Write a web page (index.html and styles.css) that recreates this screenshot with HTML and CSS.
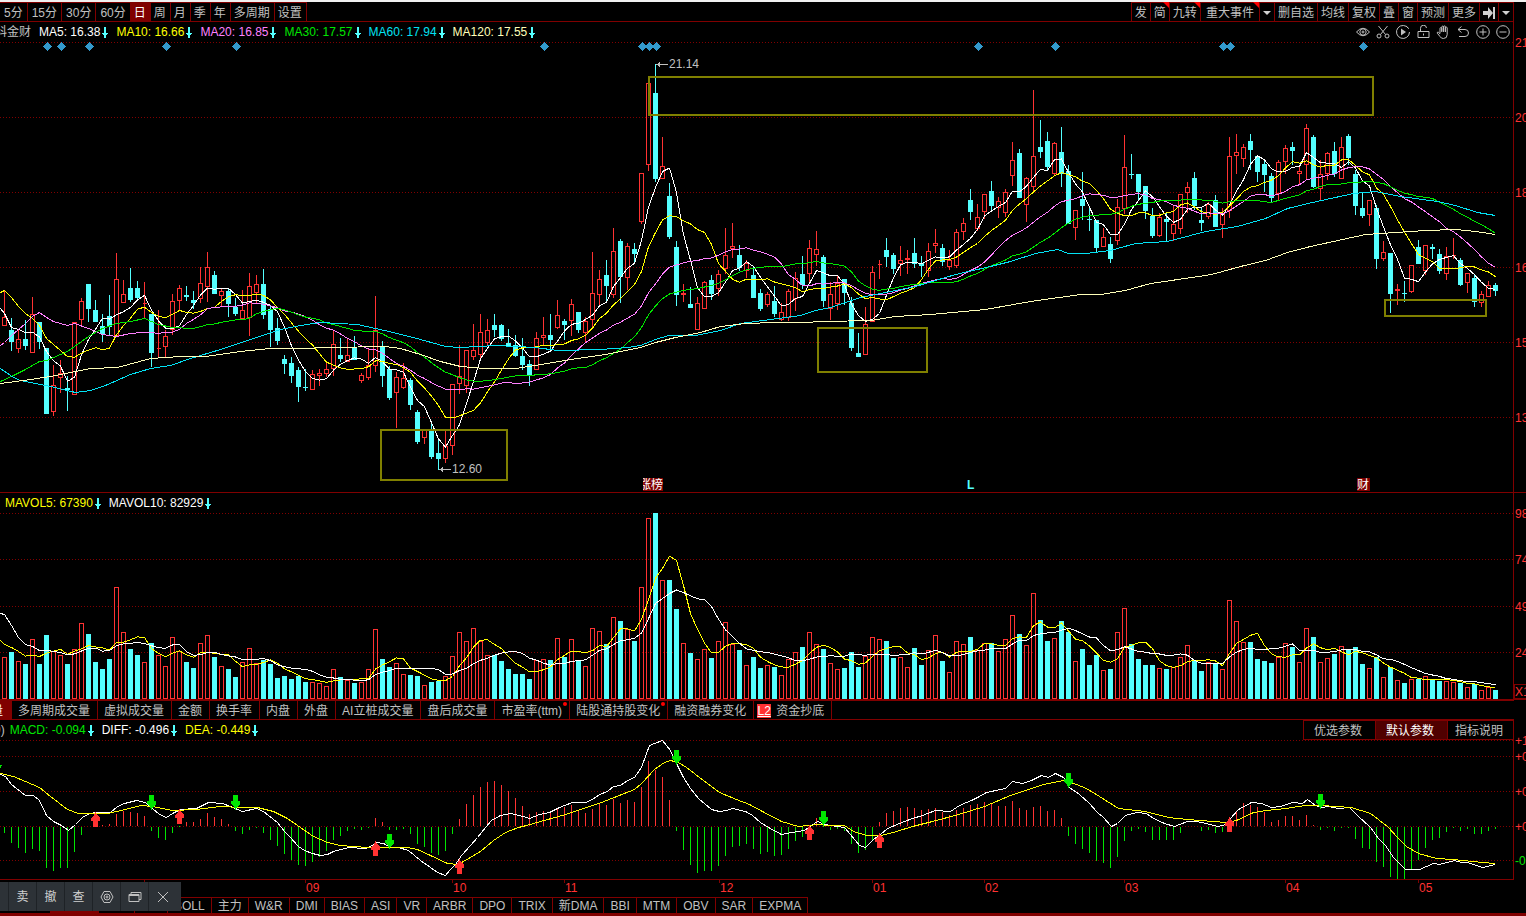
FILE: index.html
```html
<!DOCTYPE html>
<html lang="zh-CN">
<head>
    <meta charset="UTF-8">
    <meta name="viewport" content="width=device-width, initial-scale=1.0">
    <title>日K线</title>
    <link rel="stylesheet" href="styles.css">
</head>
<body>
    <svg class="defs" width="0" height="0" aria-hidden="true">
        <symbol id="down" viewBox="0 0 7 11"><path d="M3 0h2v6h2v1h-1v1h-1v3h-2v-3h-1v-1h-1v-1h2z" fill="#54ffff"/></symbol>
    </svg>

    <header class="toolbar">
        <nav class="tabs periods">
            <button class="wide">5分</button>
            <button class="wide">15分</button>
            <button class="wide">30分</button>
            <button class="wide">60分</button>
            <button class="active">日</button>
            <button>周</button>
            <button>月</button>
            <button>季</button>
            <button>年</button>
            <button>多周期</button>
            <button>设置</button>
        </nav>
        <nav class="tabs tools">
            <button>发</button>
            <button class="flag">简</button>
            <button class="flag">九转</button>
            <button class="flag event">重大事件</button>
            <button class="drop" aria-label="事件菜单"><svg width="8" height="4"><path d="M0 0h8l-4 4z"/></svg></button>
            <button>删自选</button>
            <button>均线</button>
            <button>复权</button>
            <button>叠</button>
            <button>窗</button>
            <button>预测</button>
            <button>更多</button>
            <button aria-label="到最右"><svg width="12" height="12"><path d="M0 4h5v-4l5 6-5 6v-4h-5zM10 0h2v12h-2z"/></svg></button>
            <button class="drop" aria-label="更多菜单"><svg width="8" height="4"><path d="M0 0h8l-4 4z"/></svg></button>
        </nav>
    </header>

    <section class="panel price">
        <div class="legend">
            <span class="name">科金财</span>
            <span class="white">MA5: 16.38<svg><use href="#down"/></svg></span>
            <span class="yellow">MA10: 16.66<svg><use href="#down"/></svg></span>
            <span class="pink">MA20: 16.85<svg><use href="#down"/></svg></span>
            <span class="green">MA30: 17.57<svg><use href="#down"/></svg></span>
            <span class="cyan">MA60: 17.94<svg><use href="#down"/></svg></span>
            <span class="cream">MA120: 17.55<svg><use href="#down"/></svg></span>
            <div class="icons">
                <button aria-label="显示"><svg viewBox="0 0 14 14"><path d="M.5 7Q7-.5 13.500 7Q7 14.500.5 7z"/><circle cx="7" cy="7" r="3.200"/><circle cx="7" cy="7" r="1"/></svg></button>
                <button aria-label="剪切"><svg viewBox="0 0 14 14"><path d="M2.500 1l7 8.500M11.500 1l-7 8.500"/><circle cx="3" cy="11" r="2"/><circle cx="11" cy="11" r="2"/></svg></button>
                <button aria-label="回放"><svg viewBox="0 0 14 14"><path d="M12.500 3.500A6.500 6.500 0 1 0 13.500 7M10 1l2.800 2.500"/><path class="solid" d="M5 3.500v7l5-3.500z"/></svg></button>
                <button aria-label="锁定"><svg viewBox="0 0 14 14"><path d="M2 6.500h11v6h-11zM4.500 6.500v-3a3 3 0 0 1 6-.5M7.500 8.500v2"/></svg></button>
                <button aria-label="拖动"><svg viewBox="0 0 14 14"><path d="M4 8.500V3.500a.9.900 0 0 1 1.800 0V7M5.800 6.500V2a.9.900 0 0 1 1.800 0v5M7.600 6.500V1.800a.9.900 0 0 1 1.800 0V7M9.400 6.800V3a.9.900 0 0 1 1.800 0v6.500q0 4-3.800 4q-2.400 0-3.400-2L1.300 8.200q-.4-1.400 1-1L4 8.800"/></svg></button>
                <button aria-label="撤销"><svg viewBox="0 0 14 14"><path d="M5.500 1.500l-3.500 3 3.500 3M2 4.500h7a3.500 3.500 0 0 1 0 7H3"/></svg></button>
                <button aria-label="放大"><svg viewBox="0 0 14 14"><circle cx="7" cy="7" r="6.300"/><path d="M3.500 7h7M7 3.500v7"/></svg></button>
                <button aria-label="缩小"><svg viewBox="0 0 14 14"><circle cx="7" cy="7" r="6.300"/><path d="M3.500 7h7"/></svg></button>
            </div>
        </div>
        <svg id="price" class="chart" viewBox="0 42 1526 450"></svg>
    </section>

    <section class="panel volume">
        <div class="legend">
            <span class="yellow">MAVOL5: 67390<svg><use href="#down"/></svg></span>
            <span class="white">MAVOL10: 82929<svg><use href="#down"/></svg></span>
        </div>
        <svg id="volume" class="chart" viewBox="0 513 1526 186"></svg>
    </section>

    <nav class="tabs indicators">
        <button class="active cut">量</button>
        <button>多周期成交量</button>
        <button>虚拟成交量</button>
        <button>金额</button>
        <button>换手率</button>
        <button>内盘</button>
        <button>外盘</button>
        <button>AI立桩成交量</button>
        <button>盘后成交量</button>
        <button class="dot">市盈率(ttm)</button>
        <button class="dot">陆股通持股变化</button>
        <button>融资融券变化</button>
        <button class="level"><b>L2</b>资金抄底</button>
    </nav>

    <section class="panel macd">
        <div class="legend">
            <span class="param">9)</span>
            <span class="green">MACD: -0.094<svg><use href="#down"/></svg></span>
            <span class="white">DIFF: -0.496<svg><use href="#down"/></svg></span>
            <span class="yellow">DEA: -0.449<svg><use href="#down"/></svg></span>
            <div class="params">
                <button>优选参数</button>
                <button class="active">默认参数</button>
                <button>指标说明</button>
            </div>
        </div>
        <svg id="macd" class="chart" viewBox="0 740 1526 157"></svg>
    </section>

    <footer class="bottom">
        <nav class="tabs formulas">
            <button class="first">成交量</button>
            <button class="active">MACD</button>
            <button>KDJ</button>
            <button>RSI</button>
            <button>BOLL</button>
            <button>主力</button>
            <button>W&amp;R</button>
            <button>DMI</button>
            <button>BIAS</button>
            <button>ASI</button>
            <button>VR</button>
            <button>ARBR</button>
            <button>DPO</button>
            <button>TRIX</button>
            <button>新DMA</button>
            <button>BBI</button>
            <button>MTM</button>
            <button>OBV</button>
            <button>SAR</button>
            <button>EXPMA</button>
        </nav>
        <div class="trade">
            <button>卖</button>
            <button>撤</button>
            <button>查</button>
            <button aria-label="设置"><svg width="14" height="14"><path d="M4 1.500h6l3 5.500-3 5.500H4L1 7z"/><circle cx="7" cy="7" r="3"/><circle cx="7" cy="7" r="1"/></svg></button>
            <button aria-label="窗口"><svg width="14" height="14"><path d="M1 4.500h10v7H1zM3 4V2.500h10v7h-2M1 5.500h10"/></svg></button>
            <button aria-label="关闭"><svg width="14" height="14"><path d="M2 2l10 10M12 2L2 12"/></svg></button>
        </div>
    </footer>

    <script src="chart.js"></script>
</body>
</html>
```
FILE: styles.css
```css
* {
    box-sizing: border-box;
}

body {
    margin: 0;
    border-top: 2px solid #f0f0f0;
    background: #000;
    color: #c0c0c0;
    font-family: "Liberation Sans", "Noto Sans CJK SC", sans-serif;
    font-size: 12px;
    line-height: 18px;
    overflow-x: hidden;
}

button {
    margin: 0;
    padding: 0;
    border: 0;
    background: none;
    color: inherit;
    font: inherit;
    white-space: nowrap;
    cursor: pointer;
}

.defs {
    position: absolute;
}

/* tab rows */
.tabs {
    display: flex;
}

.tabs button {
    position: relative;
    display: flex;
    align-items: center;
    flex-shrink: 0;
    border-right: 1px solid #800000;
}

.tabs .active {
    background: #800000;
    color: #fff;
}

.toolbar {
    display: flex;
    justify-content: space-between;
    height: 20px;
    margin-right: 12px;
    border-bottom: 1px solid #800000;
}

.toolbar button {
    padding: 1px 4px 0 3px;
    border-top: 1px solid #800000;
}

.toolbar .wide {
    padding: 1px 4px 0;
}

.toolbar .tools button {
    padding: 1px 3px 0;
}

.toolbar .tools button:first-child {
    border-left: 1px solid #800000;
}

.toolbar .tools .event {
    padding: 1px 5px 0;
}

.toolbar svg {
    fill: #d0d0d0;
}

.flag::after {
    content: "";
    position: absolute;
    top: -1px;
    right: 0;
    border: 3px solid #ff0000;
    border-left-color: transparent;
    border-bottom-color: transparent;
}

/* panels */
.panel {
    border-bottom: 1px solid #800000;
}

.panel.macd {
    border-bottom: 0;
}

.legend {
    display: flex;
    align-items: center;
    gap: 8px;
    height: 20px;
    margin-right: 12px;
    border-right: 1px solid #800000;
    white-space: nowrap;
}

.legend span {
    display: flex;
    align-items: center;
}

.legend span svg {
    width: 7px;
    height: 11px;
    margin-left: 1px;
}

.legend .name {
    margin-left: -5px;
}

.volume .legend {
    padding-left: 5px;
}

.legend .param {
    margin-left: -6px;
    margin-right: -3px;
}

.white { color: #fff; }
.yellow { color: #ffff00; }
.pink { color: #ff80ff; }
.green { color: #00e600; }
.cyan { color: #02e2f4; }
.cream { color: #ffffb9; }

.legend .name,
.legend .param {
    color: #c0c0c0;
}

.icons {
    display: flex;
    margin-left: auto;
}

.icons button {
    display: flex;
    justify-content: center;
    width: 20px;
}

.icons svg {
    width: 14px;
    height: 14px;
    fill: none;
    stroke: #c0c0c0;
}

.icons .solid {
    fill: #c0c0c0;
    stroke: none;
}

.params {
    display: flex;
    align-self: stretch;
    margin-left: auto;
}

.params button {
    padding: 1px 13px 0 10px;
    border: 1px solid #800000;
    border-width: 1px 0 1px 1px;
}

.params button:last-child {
    padding: 1px 10px 0 7px;
}

.params .active {
    background: #500000;
    color: #fff;
}

/* charts */
.chart {
    display: block;
    width: 100%;
    height: auto;
    overflow: visible;
    fill: none;
    shape-rendering: crispEdges;
}

.grid {
    stroke: #800000;
    stroke-dasharray: 1 2;
}

.line {
    stroke: #800000;
}

.up {
    stroke: #ff3232;
}

.down {
    fill: #54ffff;
}

.fall {
    stroke: #00e600;
}

.ma {
    stroke: currentColor;
}

.zone {
    stroke: #808000;
    stroke-width: 2;
}

.mark {
    fill: #3399cc;
}

.tag {
    fill: #800000;
}

.buy {
    fill: #ff3232;
}

.sell {
    fill: #00e600;
}

.chart text {
    fill: #c0c0c0;
}

.chart .axis {
    fill: #ff3232;
}

.chart .axis.low {
    fill: #00e600;
}

.chart .news {
    fill: #fff;
}

.chart .letter {
    fill: #54ffff;
    font-weight: bold;
}

.callout {
    stroke: #c0c0c0;
}

/* volume indicator tabs */
.indicators {
    height: 20px;
    border-top: 1px solid #800000;
    border-bottom: 1px solid #800000;
    margin-right: 12px;
}

.indicators button {
    padding: 1px 7px 0 6px;
}

.indicators .cut {
    width: 12px;
    justify-content: flex-end;
    padding: 1px 8px 0 0;
}

.dot::after {
    content: "";
    position: absolute;
    top: 1px;
    right: 2px;
    width: 4px;
    height: 4px;
    border-radius: 2px;
    background: #ff0000;
}

.level b {
    width: 14px;
    margin: 0 5px 0 -3px;
    background: #ff3232;
    color: #fff;
    font-weight: normal;
    line-height: 14px;
    text-align: center;
    text-decoration: underline;
}

/* bottom bar */
.bottom {
    position: relative;
    border-bottom: 3px solid #800000;
}

.formulas {
    height: 16px;
}

.formulas button {
    padding: 0 6px;
    border-top: 1px solid #800000;
}

.formulas .first {
    width: 51px;
}

.trade {
    position: absolute;
    left: 0;
    bottom: 2px;
    display: flex;
    height: 29px;
    padding: 0 5px 0 8px;
    background: #2d3237;
    color: #d0d0d0;
}

.trade button {
    display: flex;
    align-items: center;
    justify-content: center;
    width: 28px;
    padding-top: 1px;
    border-left: 1px solid #1e2226;
}

.trade svg {
    fill: none;
    stroke: #c0c0c0;
}
```
FILE: chart.js
```js
const STEP = 7;

// [rising, high, body top, body bottom, low] on the plot scale
const candles = [
    [1,291,317,326,326],[0,318,330,342,351],[1,330,339,349,353],[0,320,339,346,350],[1,297,314,353,353],
    [0,322,322,342,349],[0,348,348,414,414],[1,365,385,412,416],[1,360,373,378,393],[0,376,388,390,411],
    [1,322,322,395,395],[1,298,301,320,325],[0,284,284,309,322],[0,300,310,322,322],[0,314,326,334,342],
    [0,295,316,327,336],[1,253,279,336,336],[1,280,294,303,303],[0,268,288,300,302],[0,281,288,298,301],
    [1,282,303,304,318],[0,314,314,353,367],[1,310,348,349,357],[1,330,336,347,358],[1,294,301,330,335],
    [1,285,288,301,311],[0,286,295,297,301],[0,291,300,303,309],[1,267,283,299,303],[1,252,267,287,302],
    [0,271,275,294,294],[1,289,291,296,307],[0,289,291,304,317],[0,298,307,314,316],[1,290,310,319,319],
    [1,273,286,318,336],[1,275,284,293,303],[0,269,284,315,319],[0,306,309,330,347],[0,318,328,341,345],
    [0,355,359,364,374],[0,357,363,376,383],[0,367,370,387,402],[0,369,387,388,391],[1,370,374,390,390],
    [1,369,373,376,386],[1,362,369,374,377],[1,330,344,369,376],[0,338,355,359,362],[1,338,355,362,362],
    [0,336,347,360,360],[1,373,375,381,383],[1,349,365,378,380],[1,296,330,366,372],[0,341,347,376,387],
    [0,366,369,398,400],[1,372,377,393,428],[1,363,378,388,389],[0,378,380,405,410],[0,410,412,442,444],
    [1,429,429,438,444],[0,422,430,457,459],[0,440,453,459,470],[1,429,446,459,463],[1,384,384,446,455],
    [1,345,376,384,394],[1,350,350,386,393],[1,324,350,357,360],[1,314,332,355,358],[1,319,330,343,345],
    [0,314,325,330,337],[0,324,325,339,341],[0,329,343,347,347],[0,335,345,356,357],[0,338,356,365,370],
    [0,360,364,375,386],[1,332,338,370,370],[1,317,335,338,346],[0,314,335,340,351],[1,300,315,328,329],
    [0,319,321,325,340],[1,299,304,321,336],[0,312,312,330,333],[1,317,321,333,342],[1,252,293,320,329],
    [1,270,279,295,307],[0,260,275,286,302],[1,228,251,295,298],[0,239,241,277,303],[1,243,246,278,290],
    [0,243,249,254,263],[1,173,173,222,224],[1,83,83,165,171],[0,64,93,179,182],[1,137,166,179,179],
    [0,183,196,237,239],[0,241,247,295,306],[1,284,293,295,302],[0,287,304,308,308],[1,297,303,330,330],
    [1,281,282,309,309],[0,275,280,294,300],[1,270,274,289,296],[1,228,255,269,274],[1,223,246,249,258],
    [0,245,255,268,271],[1,260,263,271,278],[0,267,275,298,298],[0,289,293,309,311],[1,292,294,305,307],
    [0,286,301,314,317],[1,303,312,320,321],[1,289,291,318,321],[1,272,278,299,311],[0,256,274,285,289],
    [1,240,248,274,283],[1,231,249,255,266],[0,255,257,301,307],[1,282,294,309,320],[1,275,283,304,310],
    [0,279,279,293,305],[0,297,303,348,351],[0,333,353,357,357],[1,307,324,355,355],[1,266,272,322,322],
    [1,260,264,265,279],[0,238,250,257,267],[0,253,255,269,274],[1,246,260,264,276],[1,250,258,260,274],
    [0,238,253,264,268],[0,256,263,266,277],[1,243,251,271,277],[1,229,243,246,253],[0,244,248,262,266],
    [1,250,260,267,270],[1,229,232,266,268],[1,218,223,232,240],[0,189,200,212,220],[1,204,217,229,231],
    [1,194,194,212,219],[0,181,191,206,210],[1,197,201,208,218],[1,189,192,213,217],[1,142,160,176,186],
    [0,149,153,198,198],[1,177,178,205,222],[1,90,156,187,192],[0,120,147,152,158],[0,132,141,167,170],
    [1,142,143,174,176],[0,127,152,174,187],[0,165,171,224,224],[1,210,210,228,240],[0,172,199,206,220],
    [0,207,219,220,231],[0,220,220,248,252],[1,228,237,247,247],[0,237,244,259,263],[1,199,207,241,245],
    [1,135,167,209,214],[0,154,174,175,179],[0,174,174,192,200],[0,186,186,211,219],[0,208,216,236,238],
    [1,213,217,236,237],[0,213,219,222,242],[1,206,224,234,241],[1,194,194,229,234],[1,182,187,193,213],
    [0,172,178,206,210],[0,207,220,223,231],[1,202,204,217,219],[0,195,200,227,227],[1,208,214,225,238],
    [1,137,156,211,218],[1,134,152,156,174],[1,144,147,159,167],[0,134,141,150,170],[0,156,156,172,182],
    [0,160,164,175,192],[0,173,176,198,202],[1,160,162,194,201],[1,145,148,162,174],[0,142,147,151,165],
    [1,166,171,174,184],[1,124,128,165,179],[0,135,137,187,188],[1,160,174,189,200],[1,152,153,174,180],
    [0,142,151,174,177],[1,137,147,179,179],[0,134,136,158,165],[0,170,174,206,215],[0,193,208,216,218],
    [1,200,200,215,226],[0,205,208,259,269],[1,241,252,259,261],[0,253,253,294,313],[1,284,289,291,305],
    [0,281,293,294,302],[1,265,265,292,293],[0,240,247,264,264],[1,245,245,271,275],[0,244,247,249,259],
    [0,249,254,271,274],[1,247,256,274,280],[1,238,255,256,259],[0,258,260,285,286],[1,273,273,283,293],
    [0,275,278,302,307],[1,291,294,303,307],[1,281,285,297,297],[0,283,285,291,296]
];

const volumes = [
    657,652,661,664,639,664,635,651,655,664,649,623,634,662,669,659,587,632,649,655,
    662,643,655,666,637,651,662,668,643,635,657,666,669,677,662,648,663,660,664,678,
    676,679,676,682,682,683,686,669,677,680,683,682,669,629,659,667,663,674,675,676,
    685,682,681,676,656,632,641,628,641,655,655,661,669,674,674,679,660,659,660,638,
    657,639,661,666,628,631,644,617,621,629,641,587,518,513,580,580,609,643,653,659,
    649,658,641,622,644,650,665,657,668,665,667,675,659,652,647,632,644,649,663,669,
    668,652,667,656,637,639,641,658,657,667,648,665,650,635,661,672,641,644,637,650,
    643,643,651,639,615,634,645,593,620,641,638,621,632,661,649,665,655,670,669,632,
    608,644,659,665,665,668,669,667,657,645,661,671,662,663,669,600,621,642,642,659,
    661,663,657,643,647,662,628,637,662,658,654,646,650,647,664,668,657,677,667,680,
    683,679,679,676,679,681,681,682,683,687,684,690,687,690
];

// the nine sessions left of the visible range, needed by the averages
const earlierVolumes = [542,541,594,619,624,637,641,641,644];

const bars = [
    833,843,848,853,849,851,868,871,868,868,852,835,827,826,825,824,814,811,812,813,
    816,831,838,840,833,826,822,822,819,813,817,819,824,831,834,830,828,833,840,846,
    854,860,865,866,862,857,851,840,836,831,829,830,828,818,822,830,830,829,834,844,
    847,853,855,851,834,819,804,795,787,782,781,785,791,798,806,814,812,811,813,808,
    807,805,810,813,809,804,805,799,803,800,802,787,761,770,777,800,831,850,865,873,
    871,871,866,856,847,846,844,849,854,852,856,855,849,841,837,829,818,826,830,829,
    831,844,853,850,841,822,813,811,808,807,808,810,809,808,812,815,810,808,805,804,
    802,804,806,806,801,808,810,807,806,811,810,818,836,844,849,853,861,863,868,857,
    841,831,829,832,840,840,840,840,833,827,827,831,830,833,832,825,812,803,805,807,
    812,822,820,816,816,820,815,825,830,828,831,828,828,839,848,849,862,867,877,879,
    879,869,860,848,840,838,832,828,831,829,834,834,831,829
];

const ma60 = "0,368 13,377 20,380 50,386 75,392 90,390 105,385 130,374 150,368 170,365 190,358 220,349 250,339 280,329 300,325 320,322 357,324 384,330 413,337 445,346 460,347 495,345 535,347 557,350 600,349 627,347 640,345 655,339 668,335 695,335 720,330 740,323 770,319 800,315 815,310 830,307 860,297 880,293 915,286 955,274 990,266 1010,261 1035,253 1057,249 1068,253 1085,253 1110,250 1135,243 1167,241 1190,235 1205,231 1237,226 1265,218 1287,208 1312,202 1353,193 1375,191 1400,196 1437,201 1455,205 1477,212 1495,215";
const ma120 = "0,383 30,379 50,376 75,371 90,368 117,367 150,358 180,356 205,356 240,351 270,348 300,348 330,347 385,346 400,348 420,354 440,361 460,366 485,368 515,368 535,365 570,359 605,354 625,350 640,347 655,342 675,337 700,332 720,326 745,323 775,322 800,322 825,321 870,320 895,316 930,314 985,309 1030,301 1080,294 1100,294 1125,290 1150,283 1205,275 1215,273 1240,266 1265,260 1287,252 1310,246 1365,234 1395,232 1425,230 1455,229 1475,231 1495,234";
const diff = "0,774 5,776 11,784 25,795 33,795 39,800 46,815 53,821 61,825 68,830 75,824 82,817 89,813 96,812 110,812 117,806 124,803 136,800 145,802 152,808 159,814 166,817 172,813 180,809 196,808 208,802 222,803 230,806 242,811 256,808 263,811 277,822 284,831 290,837 298,846 304,850 312,853 320,855 327,854 333,851 348,847 365,848 370,846 376,842 383,843 390,847 398,847 408,850 420,860 430,867 437,872 445,875 450,869 455,864 461,855 470,845 477,837 485,827 491,820 500,815 510,813 523,816 529,818 539,814 549,812 559,807 572,802 585,802 592,799 599,794 607,791 613,786 620,785 627,780 634,777 641,767 649,745 662,740 670,750 677,765 683,777 690,788 698,798 711,809 719,811 726,810 732,808 745,811 752,815 760,822 768,827 781,834 791,832 804,830 811,825 817,821 824,824 844,827 850,834 859,845 865,847 873,839 880,834 887,828 899,823 912,818 922,815 935,810 950,811 956,807 961,804 971,800 979,796 986,792 1005,788 1012,781 1022,783 1031,780 1041,775 1048,777 1055,773 1063,777 1069,787 1079,794 1089,803 1097,812 1103,817 1111,826 1117,823 1125,815 1136,812 1146,813 1153,818 1164,823 1174,826 1187,821 1196,821 1206,823 1217,826 1223,825 1230,818 1238,809 1251,802 1261,803 1271,807 1280,806 1292,802 1302,803 1307,799 1315,805 1321,807 1328,806 1338,808 1349,807 1357,815 1370,827 1378,838 1385,845 1393,857 1405,869 1419,869 1433,863 1439,864 1454,860 1461,862 1467,862 1482,867 1495,864";
const dea = "0,773 13,776 25,781 39,787 50,796 67,809 78,813 107,813 125,809 140,805 152,806 172,810 195,809 220,806 240,807 257,807 273,811 287,818 300,827 313,836 327,842 340,845 367,847 407,847 417,849 430,855 447,863 457,864 463,861 480,851 493,840 505,832 518,827 526,825 565,814 601,802 634,789 641,783 654,769 664,762 670,760 678,762 686,767 703,780 719,792 736,799 749,804 762,811 781,821 798,826 817,824 827,825 844,825 853,831 866,835 880,835 893,832 912,826 932,821 958,814 984,806 1010,795 1043,784 1063,780 1076,784 1086,788 1099,796 1118,808 1145,811 1168,817 1187,819 1213,821 1226,822 1236,820 1253,812 1266,810 1285,808 1305,805 1321,805 1351,807 1370,813 1387,826 1397,837 1406,846 1418,853 1436,858 1452,859 1482,862 1495,863";

const x = i => 4 + STEP * i;

function average(values, size, from) {
    const points = [];
    for (let i = Math.max(size - 1, from); i < values.length; i++) {
        const part = values.slice(i - size + 1, i + 1);
        const y = part.reduce((a, b) => a + b) / size;
        points.push(x(i - from) + "," + y.toFixed(1));
    }
    return points.join(" ");
}

const line = (name, points) => `<polyline class="ma ${name}" points="${points}" transform="translate(.5 .5)"/>`;
const path = (name, d) => `<path class="${name}" d="${d}"/>`;
const label = (name, px, y, text) => `<text class="${name}" x="${px}" y="${y}">${text}</text>`;
const grid = rows => rows.map(y => path("grid", `M0 ${y}.5H1513`)).join("");

function drawPrice() {
    const close = candles.map(c => c[0] ? c[2] : c[3]);
    let up = "", down = "";
    candles.forEach(([rising, high, top, bottom, low], i) => {
        const left = x(i) - 2;
        if (rising) {
            up += `M${x(i) + .5} ${high}V${top}M${x(i) + .5} ${bottom}V${low}`;
            up += `M${left + .5} ${top + .5}h4V${bottom - .5}h-4z`;
        } else {
            down += `M${x(i)} ${high}h1V${low}h-1zM${left} ${top}h5V${bottom}h-5z`;
        }
    });

    const marks = [6, 8, 12, 23, 33, 77, 91, 92, 93, 139, 150, 174, 175, 194]
        .map(i => `M${x(i) + 1} 42l4.500 4.500-4.500 4.500-4.500-4.500z`).join("");
    const prices = ["21.67", "20.10", "18.52", "16.94", "15.37", "13.79"];

    document.getElementById("price").innerHTML =
        grid([42, 117, 192, 267, 342, 417]) +
        path("line", "M1513.5 42V492") +
        path("up", up) + path("down", down) +
        line("white", "0,308 4,313 11,327 18,329 25,332 " + average(close, 5, 0)) +
        line("yellow", "0,292 4,290 11,297 18,306 25,313 32,318 39,325 46,338 53,344 60,350 " + average(close, 10, 0)) +
        line("pink", "0,345 4,342 11,335 25,323 32,316 39,312 46,317 53,321 67,325 74,323 88,328 102,334 116,336 130,333 " + average(close, 20, 0)) +
        line("green", "0,381 11,376 25,369 39,361 46,360 67,351 81,341 88,336 102,328 116,323 130,321 144,318 158,324 172,327 193,328 " + average(close, 30, 0)) +
        line("cyan", ma60) + line("cream", ma120) +
        `<rect class="zone" x="649" y="77" width="724" height="38"/>
        <rect class="zone" x="818" y="328" width="109" height="44"/>
        <rect class="zone" x="381" y="430" width="126" height="50"/>
        <rect class="zone" x="1385" y="300" width="101" height="16"/>` +
        path("mark", marks) +
        path("callout", "M656 64.500h12M659.500 62v5M658.500 63v3M439 469.500h12M442.500 467v5M441.500 468v3") +
        label("", 669, 68, "21.14") + label("", 452, 473, "12.60") +
        path("tag", "M643 478h20v13h-20zM1357 478h13v13h-13z") +
        `<svg x="643" y="478" width="8" height="13">${label("news", -4, 11, "涨")}</svg>` +
        label("news", 651, 489, "榜") + label("letter", 967, 489, "L") + label("news", 1357, 489, "财") +
        prices.map((p, i) => label("axis", 1515, 47 + 75 * i, p)).join("");
}

function drawVolume() {
    let up = "", down = "";
    volumes.forEach((y, i) => {
        const left = x(i) - 2;
        if (candles[i][0]) {
            up += `M${left + .5} ${y + .5}h4V698.5h-4z`;
        } else {
            down += `M${left} ${y}h5V699h-5z`;
        }
    });
    const all = earlierVolumes.concat(volumes);

    document.getElementById("volume").innerHTML =
        grid([513, 559, 606, 652]) +
        path("line", "M1513.5 492V699M1513.500 684.500H1526M1514.500 684V699M1514 698.500H1526") +
        path("up", up) + path("down", down) +
        line("yellow", "0,640 " + average(all, 5, 9)) +
        line("white", "0,613 " + average(all, 10, 9)) +
        label("axis", 1515, 518, "983") + label("axis", 1515, 564, "740") +
        label("axis", 1515, 611, "493") + label("axis", 1515, 657, "247") +
        label("axis", 1515, 696, "X100");
}

function drawMacd() {
    let up = "", fall = "";
    bars.forEach((y, i) => {
        if (y < 826) up += `M${x(i) + .5} 826V${y}`;
        else fall += `M${x(i) + .5} 827V${y}`;
    });
    const sell = [[21, 795], [33, 795], [55, 834], [96, 750], [117, 811], [152, 773], [188, 794]]
        .map(([i, y]) => `M${x(i) - 2} ${y}h5v6h2v3l-3 3-1.500 3-1.500-3-3-3v-3h2z`).join("");
    const buy = [[13, 812], [25, 809], [53, 841], [65, 859], [115, 825], [125, 833], [175, 817]]
        .map(([i, y]) => `M${x(i) - 2} ${y + 15}h5v-6h2v-3l-3-3-1.500-3-1.500 3-3 3v3h2z`).join("");
    const months = [[144, "08"], [305, "09"], [452, "10"], [564, "11"], [719, "12"],
        [872, "01"], [984, "02"], [1124, "03"], [1285, "04"], [1418, "05"]];

    document.getElementById("macd").innerHTML =
        grid([740, 756, 791, 826, 860]) +
        path("line", "M1513.5 740V880M0 879.500H1513") +
        path("up", up) + path("fall", fall) +
        line("white", diff) + line("yellow", dea) +
        path("sell", sell + "M0 765h2v1h-1v2h-1z") + path("buy", buy) +
        months.map(([px, m]) => path("line", `M${px}.5 880v3`) + label("axis", px + 1, 892, m)).join("") +
        [745, 761, 796, 831].map((y, i) => label("axis", 1515, y, i ? "+0" : "+1")).join("") +
        label("axis low", 1515, 865, "-0.4");
}

drawPrice();
drawVolume();
drawMacd();
```
